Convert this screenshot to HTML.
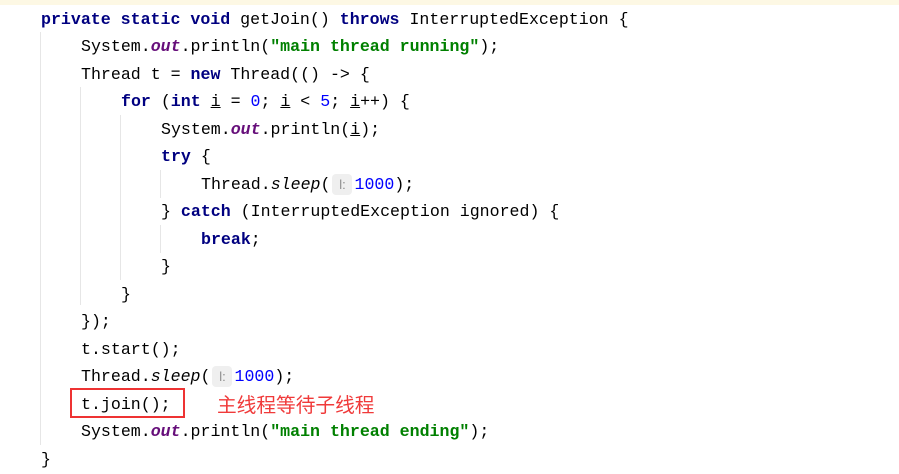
<!DOCTYPE html>
<html><head><meta charset="utf-8"><style>
body{margin:0;width:899px;height:474px;background:#fff;overflow:hidden;position:relative;font-family:"Liberation Mono","DejaVu Sans Mono",monospace;font-size:16.6px;color:#000}
.top{position:absolute;left:0;top:0;width:899px;height:5px;background:#fdf8e4}
.l{position:absolute;white-space:pre;height:27px;line-height:27px}
.k{color:#000080;font-weight:bold}
.s{color:#008000;font-weight:bold}
.f{color:#660e7a;font-style:italic;font-weight:bold}
.i{font-style:italic}
.n{color:#0000ff}
.u{text-decoration:underline}
.h{display:inline-block;width:20px;height:21px;line-height:21px;background:#efefef;border-radius:4px;color:#8c8c8c;font-size:13px;text-align:center;vertical-align:middle;margin:0 2px 0 2px;font-family:"Liberation Sans",sans-serif}
.g{position:absolute;width:1px;background:#e6e6e6}
.box{position:absolute;left:70px;top:388px;width:111px;height:26px;border:2px solid #ee3333}
.cn{position:absolute;left:217px;top:393px;font-family:"Liberation Sans","Noto Sans CJK SC",sans-serif;font-size:19.7px;color:#f03a3a;line-height:26px}
</style></head><body>
<div class="top"></div>
<div class="g" style="left:40px;top:32px;height:413px"></div>
<div class="g" style="left:80px;top:87px;height:218px"></div>
<div class="g" style="left:120px;top:115px;height:165px"></div>
<div class="g" style="left:160px;top:170px;height:28px"></div>
<div class="g" style="left:160px;top:225px;height:28px"></div>
<div class="l" style="left:41px;top:6px"><span class="k">private static void</span> getJoin() <span class="k">throws</span> InterruptedException {</div>
<div class="l" style="left:81px;top:33px">System.<span class="f">out</span>.println(<span class="s">"main thread running"</span>);</div>
<div class="l" style="left:81px;top:61px">Thread t = <span class="k">new</span> Thread(() -&gt; {</div>
<div class="l" style="left:121px;top:88px"><span class="k">for</span> (<span class="k">int</span> <span class="u">i</span> = <span class="n">0</span>; <span class="u">i</span> &lt; <span class="n">5</span>; <span class="u">i</span>++) {</div>
<div class="l" style="left:161px;top:116px">System.<span class="f">out</span>.println(<span class="u">i</span>);</div>
<div class="l" style="left:161px;top:143px"><span class="k">try</span> {</div>
<div class="l" style="left:201px;top:171px">Thread.<span class="i">sleep</span>(<span class="h">l:</span><span class="n">1000</span>);</div>
<div class="l" style="left:161px;top:198px">} <span class="k">catch</span> (InterruptedException ignored) {</div>
<div class="l" style="left:201px;top:226px"><span class="k">break</span>;</div>
<div class="l" style="left:161px;top:253px">}</div>
<div class="l" style="left:121px;top:281px">}</div>
<div class="l" style="left:81px;top:308px">});</div>
<div class="l" style="left:81px;top:336px">t.start();</div>
<div class="l" style="left:81px;top:363px">Thread.<span class="i">sleep</span>(<span class="h">l:</span><span class="n">1000</span>);</div>
<div class="l" style="left:81px;top:391px">t.join();</div>
<div class="l" style="left:81px;top:418px">System.<span class="f">out</span>.println(<span class="s">"main thread ending"</span>);</div>
<div class="l" style="left:41px;top:446px">}</div>
<div class="box"></div>
<div class="cn">主线程等待子线程</div>
</body></html>
